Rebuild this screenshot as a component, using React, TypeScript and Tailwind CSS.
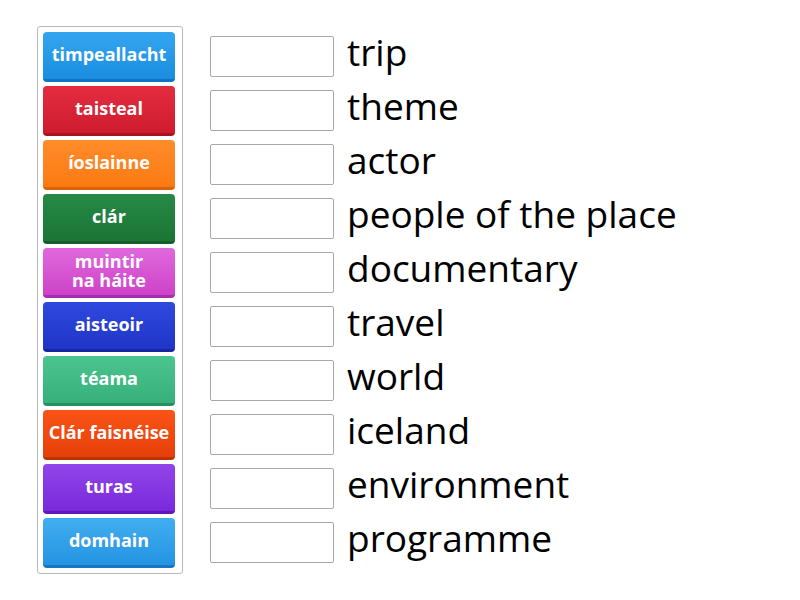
import React from "react";

const items: { label: string; bg: string }[] = [
  { label: "timpeallacht", bg: "bg-gradient-to-b from-[#34a6f0] to-[#1a8de0] border-b-[#0f74c2]" },
  { label: "taisteal", bg: "bg-gradient-to-b from-[#e42c40] to-[#cf1b2e] border-b-[#a81324]" },
  { label: "íoslainne", bg: "bg-gradient-to-b from-[#ff8c2a] to-[#fb7a10] border-b-[#d9620a]" },
  { label: "clár", bg: "bg-gradient-to-b from-[#268a45] to-[#1b7535] border-b-[#135e29]" },
  { label: "muintir\nna háite", bg: "bg-gradient-to-b from-[#e068dc] to-[#cd42c9] border-b-[#a92fa6]" },
  { label: "aisteoir", bg: "bg-gradient-to-b from-[#3048de] to-[#1f35c8] border-b-[#1626a0]" },
  { label: "téama", bg: "bg-gradient-to-b from-[#4cc48f] to-[#36b07b] border-b-[#27905f]" },
  { label: "Clár faisnéise", bg: "bg-gradient-to-b from-[#fb5316] to-[#e6400a] border-b-[#bd3205]" },
  { label: "turas", bg: "bg-gradient-to-b from-[#9144e8] to-[#7a28dc] border-b-[#5f17b8]" },
  { label: "domhain", bg: "bg-gradient-to-b from-[#41aef0] to-[#2494e2] border-b-[#1677c0]" },
];

const words = [
  "trip",
  "theme",
  "actor",
  "people of the place",
  "documentary",
  "travel",
  "world",
  "iceland",
  "environment",
  "programme",
];

export default function App() {
  return (
    <div
      className="w-[800px] h-[600px] bg-white flex items-start pl-[37px] pt-[26px] gap-[27px]"
      style={{ fontFamily: '"Open Sans", sans-serif' }}
    >
      <div className="w-[146px] border border-[#b8b8b8] rounded-[3px] pl-[5px] pr-[6px] pt-[5px] pb-[5px] flex flex-col gap-[4px]">
        {items.map((it) => (
          <div
            key={it.label}
            className={`h-[50px] w-[132px] rounded-[4px] border-b-[3px] flex items-center justify-center text-white font-bold text-[18px] leading-[19px] text-center whitespace-pre-line pb-[2px] ${it.bg}`}
          >
            {it.label}
          </div>
        ))}
      </div>
      <div className="flex flex-col gap-[13px] pt-[10px]">
        {words.map((w) => (
          <div key={w} className="flex items-center h-[41px] gap-[13px]">
            <div className="w-[124px] h-[41px] border border-[#a8a8a8] rounded-[2px] bg-white shrink-0" />
            <div className="text-[37px] leading-[41px] text-black -mt-[10px] whitespace-nowrap">{w}</div>
          </div>
        ))}
      </div>
    </div>
  );
}
